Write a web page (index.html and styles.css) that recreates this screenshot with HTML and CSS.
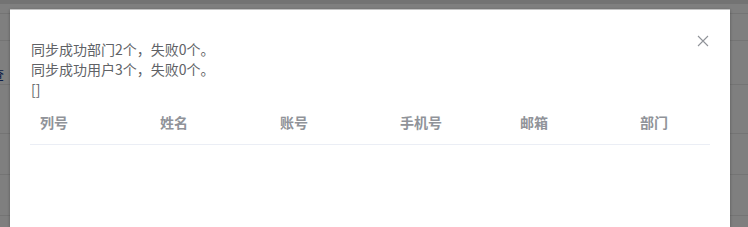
FILE: index.html
```html
<!DOCTYPE html>
<html lang="zh">
<head>
<meta charset="utf-8">
<link rel="stylesheet" href="styles.css">
</head>
<body>
<div class="page">
  <div class="topbar"></div>
  <div class="row r1"></div>
  <div class="row r2"></div>
  <div class="row r3"><span class="peek">查</span></div>
  <div class="row r4"></div>
  <div class="row r5"></div>
  <div class="row r6"></div>
</div>
<div class="mask"></div>
<div class="dialog">
  <button class="close" aria-label="关闭">
    <svg width="12" height="12" viewBox="0 0 12 12"><path d="M1 1L11 11M11 1L1 11" stroke="#909399" stroke-width="1.1" fill="none"/></svg>
  </button>
  <div class="body">
    <div class="msg">同步成功部门2个，失败0个。</div>
    <div class="msg">同步成功用户3个，失败0个。</div>
    <div class="msg">[]</div>
    <div class="table">
      <div class="thead">
        <div class="th">列号</div>
        <div class="th">姓名</div>
        <div class="th">账号</div>
        <div class="th">手机号</div>
        <div class="th">邮箱</div>
        <div class="th">部门</div>
      </div>
    </div>
  </div>
</div>
</body>
</html>
```
FILE: styles.css
```css
html, body {
  margin: 0;
  padding: 0;
  width: 748px;
  height: 227px;
  overflow: hidden;
}
body {
  font-family: "Noto Sans CJK SC", "Liberation Sans", sans-serif;
  background: #ffffff;
  position: relative;
}
.page {
  display: flex;
  flex-direction: column;
}
.topbar {
  height: 4px;
  background: #e6e6e6;
  border-bottom: 9px solid #ffffff;
}
.row {
  border-top: 1px solid #e8e8e8;
  box-sizing: border-box;
}
.r1 { height: 27px; }
.r2 { height: 44px; position: relative; }
.r3 { height: 49px; position: relative; }
.r4 { height: 41px; }
.r5 { height: 41px; }
.r6 { height: 11px; }
.peek {
  position: absolute;
  left: -9px;
  top: -21px;
  font-size: 13px;
  color: #1a3d8f;
}
.mask {
  position: absolute;
  inset: 0;
  background: rgba(0, 0, 0, 0.5);
}
.dialog {
  position: absolute;
  left: 10px;
  top: 9px;
  width: 720px;
  height: 217px;
  overflow: hidden;
  background: #ffffff;
  border-top: 1px solid #c4c4c4;
  box-shadow: 0 1px 3px rgba(0, 0, 0, 0.3);
}
.close {
  position: absolute;
  top: 25px;
  right: 21px;
  width: 12px;
  height: 12px;
  padding: 0;
  border: 0;
  background: none;
  display: flex;
}
.body {
  padding: 29px 20px 0 20px;
}
.msg {
  font-size: 14px;
  line-height: 20px;
  color: #606266;
  padding-left: 1px;
}
.table {
  width: 680px;
  overflow: hidden;
}
.thead {
  display: flex;
  border-bottom: 1px solid #ebeef5;
}
.th {
  flex: 0 0 120px;
  box-sizing: border-box;
  padding: 12px 10px 10px 10px;
  line-height: 23px;
  font-size: 14px;
  font-weight: bold;
  color: #909399;
}
```
